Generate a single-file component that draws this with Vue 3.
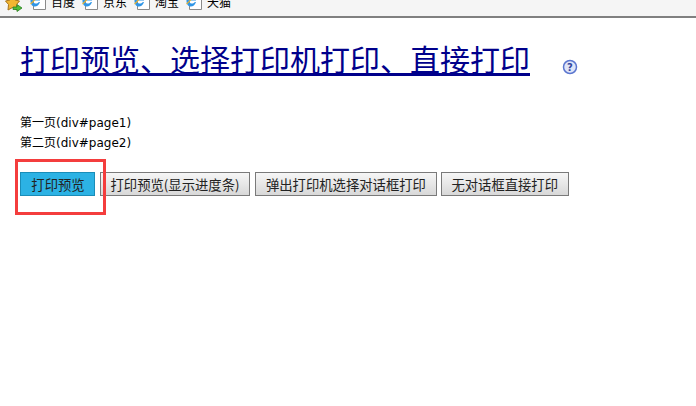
<script setup>
const links = ['百度', '京东', '淘宝', '天猫']
const buttons = [
  { label: '打印预览', cls: 'primary' },
  { label: '打印预览(显示进度条)', cls: 'tight' },
  { label: '弹出打印机选择对话框打印', cls: '' },
  { label: '无对话框直接打印', cls: 'last tight' }
]
</script>

<template>
  <div class="page">
    <div class="toolbar">
      <svg class="star" width="20" height="14" viewBox="0 0 20 14">
        <path d="M7.500 -4 L10 1 L14.500 2 L11.500 5.500 L12 11 L7.500 8.500 L3 11 L3.500 5.500 L0.500 2 L5 1 Z" fill="#f2b632" stroke="#a8741a" stroke-width="1" />
        <path d="M8 8 H12 V5.500 L17 9 L12 12.500 V10.500 H8 Z" fill="#4fbf3a" stroke="#2a7d22" stroke-width="0.8" />
      </svg>
      <div v-for="l in links" :key="l" class="link">
        <svg class="ie" width="16" height="16" viewBox="0 0 16 16">
          <path d="M3.500 1.500 H15.500 V15.500 H3.500 Z" fill="#fff" stroke="#8a8a8a" />
          <g transform="translate(-2 0)">
            <path d="M2.500 6.500 C1.500 2 5 0.500 7 0.500 C10 0.500 12 3 12 6.500 H4.800 C5 8.500 6 9.500 7.500 9.500 C9 9.500 10 9 10.800 8 H12 C11 11 9 12.500 6.800 12.500 C3.800 12.500 2.500 10 2.500 6.500 Z M4.800 5 H9.500 C9.400 3.500 8.500 2.500 7 2.500 C5.600 2.500 5 3.600 4.800 5 Z" fill="#2f95e6" fill-rule="evenodd" />
            <path d="M2.500 10 Q6 7 12 0" fill="none" stroke="#f0b429" stroke-width="1.100" />
          </g>
        </svg>
        <span>{{ l }}</span>
      </div>
    </div>

    <main class="content">
      <div class="title-row">
        <h1><a href="#">打印预览、选择打印机打印、直接打印</a></h1>
        <svg class="help" width="16" height="16" viewBox="0 0 16 16">
          <circle cx="8" cy="8" r="6.500" fill="#dfe5f8" stroke="#5b76cf" stroke-width="1.500" />
          <text x="8" y="11.500" text-anchor="middle" class="help-mark">?</text>
        </svg>
      </div>
      <div class="pages">
        <div>第一页(div#page1)</div>
        <div>第二页(div#page2)</div>
      </div>
      <div class="actions">
        <button v-for="b in buttons" :key="b.label" :class="['btn', b.cls]">{{ b.label }}</button>
      </div>
    </main>
    <div class="highlight"></div>
  </div>
</template>

<style scoped>
.page {
  position: relative;
  width: 696px;
  height: 406px;
  overflow: hidden;
  background: #fff;
  font-family: "DejaVu Sans", "Noto Sans CJK SC", sans-serif;
  font-size: 12px;
  color: #000;
}
.toolbar {
  height: 16px;
  display: flex;
  align-items: flex-end;
  padding-left: 5px;
  background: #f5f5f5;
  border-bottom: 2px solid #808080;
  overflow: hidden;
}
.star {
  flex: none;
  margin-right: 5px;
  margin-bottom: 3px;
}
.link {
  display: flex;
  align-items: center;
  width: 52px;
  flex: none;
  margin-bottom: 7px;
  height: 16px;
}
.ie {
  flex: none;
  margin-right: 5px;
  margin-top: 2px;
}
.content {
  padding: 25px 20px 0;
}
.title-row {
  display: flex;
  align-items: center;
  height: 36px;
}
h1 {
  margin: 0;
  font-size: 30px;
  font-weight: normal;
  line-height: 36px;
  white-space: nowrap;
}
h1 a {
  color: #00008b;
  text-decoration: underline;
}
.help {
  margin-left: 32px;
  margin-top: 12px;
}
.help-mark {
  font-size: 10px;
  font-weight: bold;
  fill: #34479c;
  font-family: "DejaVu Sans", sans-serif;
}
.pages {
  margin-top: 34px;
  line-height: 20px;
}
.actions {
  display: flex;
  margin-top: 19px;
  gap: 5px;
}
.btn {
  height: 24px;
  padding: 0 10px;
  box-sizing: border-box;
  font-family: "Noto Sans CJK SC", "DejaVu Sans", sans-serif;
  font-size: 13.33px;
  color: #222;
  white-space: nowrap;
  border: 1px solid #7a7a7a;
  background: linear-gradient(#f6f6f6, #d8d8d8);
}
.btn.tight {
  padding: 0 9.5px;
}
.btn.primary {
  width: 75px;
  padding: 0 0 0 1px;
  background: #2cb2e4;
  border-color: #1a8db8;
}
.btn.last {
  margin-left: -1px;
}
.highlight {
  position: absolute;
  left: 15px;
  top: 159px;
  width: 91px;
  height: 56px;
  box-sizing: border-box;
  border: 3px solid #f43d3d;
}
</style>
